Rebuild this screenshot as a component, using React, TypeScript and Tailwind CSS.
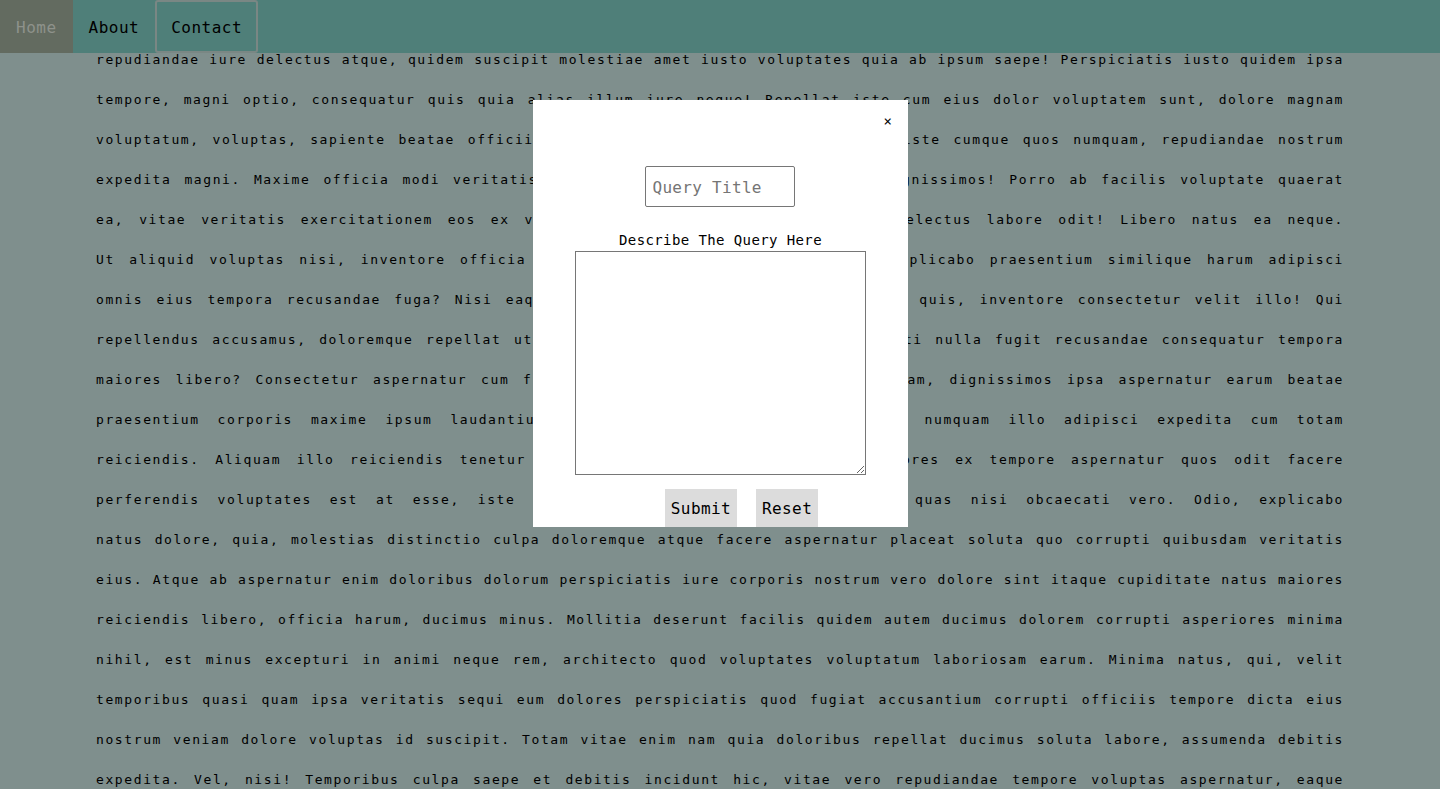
import { useState } from "react";

const lines = [
  "repudiandae iure delectus atque, quidem suscipit molestiae amet iusto voluptates quia ab ipsum saepe! Perspiciatis iusto quidem ipsa",
  "tempore, magni optio, consequatur quis quia alias illum iure neque! Repellat iste cum eius dolor voluptatem sunt, dolore magnam",
  "voluptatum, voluptas, sapiente beatae officiis nobis dolorum quae eveniet fugiat, iste cumque quos numquam, repudiandae nostrum",
  "expedita magni. Maxime officia modi veritatis ipsa quidem error sint nam, odio dignissimos! Porro ab facilis voluptate quaerat",
  "ea, vitae veritatis exercitationem eos ex voluptatem quasi nemo harum sit, ut delectus labore odit! Libero natus ea neque.",
  "Ut aliquid voluptas nisi, inventore officia dolorum eos quod ipsam vero unde, explicabo praesentium similique harum adipisci",
  "omnis eius tempora recusandae fuga? Nisi eaque impedit minus at error dolorum, id quis, inventore consectetur velit illo! Qui",
  "repellendus accusamus, doloremque repellat ut quam iure vel magnam sint fugiat, nati nulla fugit recusandae consequatur tempora",
  "maiores libero? Consectetur aspernatur cum fugit possimus ab quae eum nulla, nullam, dignissimos ipsa aspernatur earum beatae",
  "praesentium corporis maxime ipsum laudantium iure autem eos at quis, eligendi numquam illo adipisci expedita cum totam",
  "reiciendis. Aliquam illo reiciendis tenetur dolores sunt nemo quia, illo asperiores ex tempore aspernatur quos odit facere",
  "perferendis voluptates est at esse, iste blanditiis sint eos, omnis adipisci quas nisi obcaecati vero. Odio, explicabo",
  "natus dolore, quia, molestias distinctio culpa doloremque atque facere aspernatur placeat soluta quo corrupti quibusdam veritatis",
  "eius. Atque ab aspernatur enim doloribus dolorum perspiciatis iure corporis nostrum vero dolore sint itaque cupiditate natus maiores",
  "reiciendis libero, officia harum, ducimus minus. Mollitia deserunt facilis quidem autem ducimus dolorem corrupti asperiores minima",
  "nihil, est minus excepturi in animi neque rem, architecto quod voluptates voluptatum laboriosam earum. Minima natus, qui, velit",
  "temporibus quasi quam ipsa veritatis sequi eum dolores perspiciatis quod fugiat accusantium corrupti officiis tempore dicta eius",
  "nostrum veniam dolore voluptas id suscipit. Totam vitae enim nam quia doloribus repellat ducimus soluta labore, assumenda debitis",
  "expedita. Vel, nisi! Temporibus culpa saepe et debitis incidunt hic, vitae vero repudiandae tempore voluptas aspernatur, eaque",
];

const mono = "font-['DejaVu_Sans_Mono',monospace]";

export default function App() {
  const [title, setTitle] = useState("");
  const [desc, setDesc] = useState("");

  return (
    <div className={`relative h-[789px] overflow-hidden bg-[#7f8f8d] text-black ${mono}`}>
      <nav className="fixed left-0 right-0 top-0 z-10 flex h-[53px] bg-[#4f7f79] text-base leading-[20px] tracking-[0.5px]">
        <a className="flex items-center bg-[#636b60] px-4 pt-[2px] text-[#8e928b]">Home</a>
        <a className="flex items-center px-4 pt-[2px]">About</a>
        <a className="flex items-center rounded-[3px] border-2 border-[#7a8784] px-[14px] pt-[2px]">Contact</a>
      </nav>

      <main className="px-24 pt-[40px] text-[13px] leading-[40px] tracking-[1.6px]">
        {lines.map((line, i) => (
          <div key={i} className="whitespace-nowrap text-justify [text-align-last:justify]">
            {line}
          </div>
        ))}
      </main>

      <div className="fixed left-[533px] top-[100px] z-20 flex h-[427px] w-[375px] flex-col items-center overflow-hidden bg-white">
        <div className="flex w-full justify-end pr-[16px] pt-[12px] text-[14px] leading-[18px]">×</div>
        <input
          value={title}
          onChange={(e) => setTitle(e.target.value)}
          placeholder="Query Title"
          className="ml-[-2px] mt-[36px] h-[41px] w-[150px] rounded-[2px] border border-[#767676] px-[7px] pt-[2px] text-base tracking-[0.3px] outline-none placeholder:text-[#757575]"
        />
        <label className="mt-[24px] text-[14px] leading-[18px] tracking-[0.4px]">Describe The Query Here</label>
        <textarea
          value={desc}
          onChange={(e) => setDesc(e.target.value)}
          className="mt-[2px] h-[226px] w-[291px] resize border border-[#767676] outline-none"
        />
        <div className="mt-[14px] flex gap-[19px] pl-[42px]">
          <button className="h-[38px] bg-[#dcdcdc] px-[6px] pt-[2px] text-base tracking-[0.4px]">Submit</button>
          <button className="h-[38px] bg-[#dcdcdc] px-[6px] pt-[2px] text-base tracking-[0.4px]">Reset</button>
        </div>
      </div>
    </div>
  );
}
